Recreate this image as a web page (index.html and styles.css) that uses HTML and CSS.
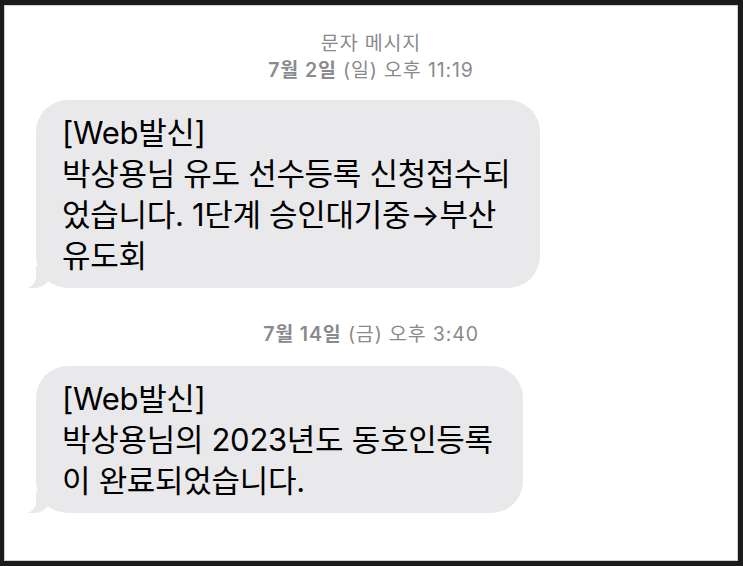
FILE: index.html
```html
<!DOCTYPE html>
<html lang="ko">
<head>
<meta charset="utf-8">
<title>문자 메시지</title>
<link rel="stylesheet" href="styles.css">
</head>
<body>
<div class="frame">
  <div class="stamp top">
    <div>문자 메시지</div>
    <div><b>7월 2일</b> (일) 오후 11:19</div>
  </div>
  <div class="bubble b1">[Web발신]<br>박상용님 유도 선수등록 신청접수되<br>었습니다. 1단계 승인대기중→부산<br>유도회</div>
  <div class="stamp mid"><b>7월 14일</b> (금) 오후 3:40</div>
  <div class="bubble b2">[Web발신]<br>박상용님의 2023년도 동호인등록<br>이 완료되었습니다.</div>
</div>
</body>
</html>
```
FILE: styles.css
```css
html, body {
  margin: 0;
  height: 100%;
}
body {
  background: #1b1b1b;
  font-family: "Inter", "Noto Sans CJK KR", sans-serif;
}
.frame {
  margin: 5px 5px 5px 4px;
  height: 556px;
  box-sizing: border-box;
  background: #fff;
  box-shadow: inset 0 0 0 1px #cfcfcf;
  display: flex;
  flex-direction: column;
  align-items: flex-start;
  padding-top: 24.5px;
}
.stamp {
  align-self: stretch;
  text-align: center;
  color: #8a8a8e;
  font-size: 19.5px;
  letter-spacing: 0.85px;
  line-height: 27px;
}
.stamp b {
  font-weight: 600;
}
.mid {
  margin-top: 32.5px;
}
.bubble {
  position: relative;
  margin-left: 32px;
  box-sizing: border-box;
  background: #e9e9eb;
  color: #000;
  border-radius: 32px;
  font-size: 31px;
  letter-spacing: -0.3px;
  line-height: 41px;
  padding: 12px 26px 12px;
  white-space: nowrap;
}
.b1 {
  margin-top: 16.5px;
  width: 504px;
}
.b2 {
  margin-top: 18.5px;
  width: 487px;
}
.bubble::before {
  content: "";
  position: absolute;
  bottom: 0;
  left: -8px;
  width: 24px;
  height: 22px;
  background: #e9e9eb;
  border-bottom-right-radius: 18px;
}
.bubble::after {
  content: "";
  position: absolute;
  bottom: 0;
  left: -11px;
  width: 11px;
  height: 22px;
  background: #fff;
  border-bottom-right-radius: 11px;
}
```
